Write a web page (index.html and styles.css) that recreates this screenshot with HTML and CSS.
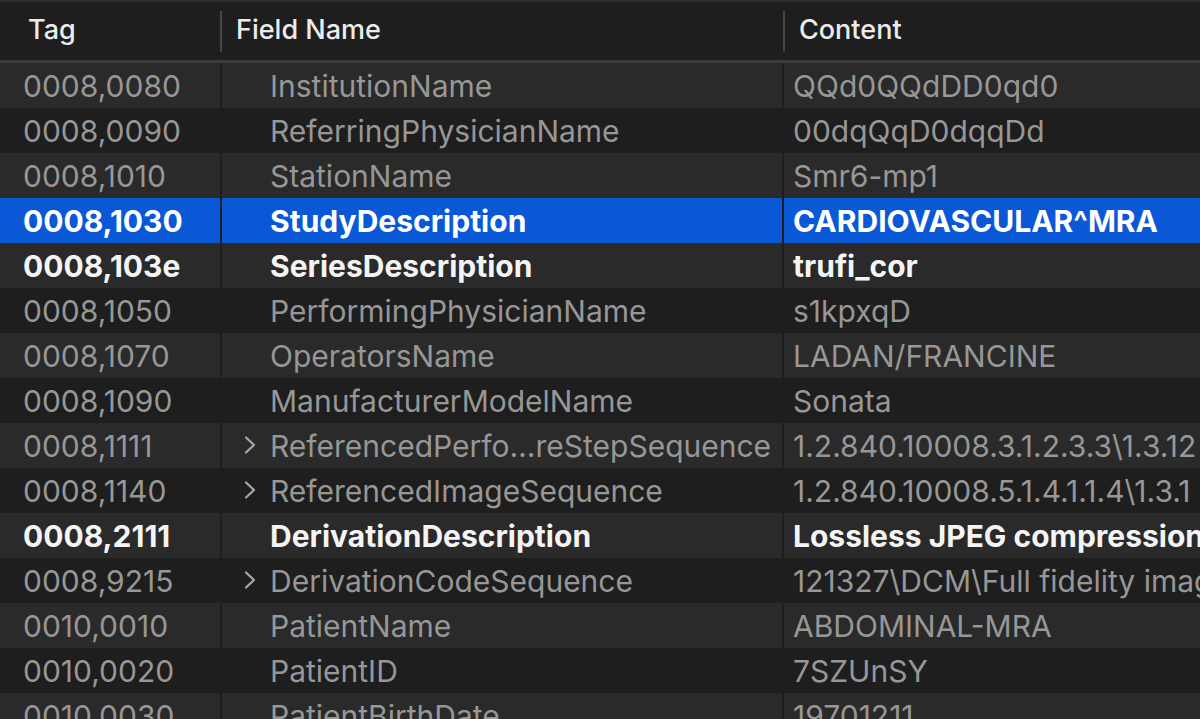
FILE: index.html
```html
<!DOCTYPE html>
<html lang="en">
<head>
    <meta charset="UTF-8">
    <title>DICOM Tags</title>
    <link rel="stylesheet" href="styles.css">
</head>
<body>
    <div class="table">
        <div class="head">
            <div class="th th-tag">Tag</div>
            <div class="th th-sep">Field Name</div>
            <div class="th th-sep">Content</div>
        </div>

        <div class="row">
            <div class="td tag">0008,0080</div>
            <div class="td name">InstitutionName</div>
            <div class="td value">QQd0QQdDD0qd0</div>
        </div>
        <div class="row">
            <div class="td tag">0008,0090</div>
            <div class="td name">ReferringPhysicianName</div>
            <div class="td value">00dqQqD0dqqDd</div>
        </div>
        <div class="row">
            <div class="td tag">0008,1010</div>
            <div class="td name">StationName</div>
            <div class="td value">Smr6-mp1</div>
        </div>
        <div class="row selected">
            <div class="td tag">0008,1030</div>
            <div class="td name">StudyDescription</div>
            <div class="td value">CARDIOVASCULAR^MRA</div>
        </div>
        <div class="row bold">
            <div class="td tag">0008,103e</div>
            <div class="td name">SeriesDescription</div>
            <div class="td value">trufi_cor</div>
        </div>
        <div class="row">
            <div class="td tag">0008,1050</div>
            <div class="td name">PerformingPhysicianName</div>
            <div class="td value">s1kpxqD</div>
        </div>
        <div class="row">
            <div class="td tag">0008,1070</div>
            <div class="td name">OperatorsName</div>
            <div class="td value">LADAN/FRANCINE</div>
        </div>
        <div class="row">
            <div class="td tag">0008,1090</div>
            <div class="td name">ManufacturerModelName</div>
            <div class="td value">Sonata</div>
        </div>
        <div class="row">
            <div class="td tag">0008,1111</div>
            <div class="td name"><svg class="chevron" viewBox="0 0 14 20"><path d="M3 2.5 L11 10 L3 17.5"/></svg>ReferencedPerfo…reStepSequence</div>
            <div class="td value">1.2.840.10008.3.1.2.3.3\1.3.12</div>
        </div>
        <div class="row">
            <div class="td tag">0008,1140</div>
            <div class="td name"><svg class="chevron" viewBox="0 0 14 20"><path d="M3 2.5 L11 10 L3 17.5"/></svg>ReferencedImageSequence</div>
            <div class="td value">1.2.840.10008.5.1.4.1.1.4\1.3.1</div>
        </div>
        <div class="row bold">
            <div class="td tag">0008,2111</div>
            <div class="td name">DerivationDescription</div>
            <div class="td value">Lossless JPEG compression</div>
        </div>
        <div class="row">
            <div class="td tag">0008,9215</div>
            <div class="td name"><svg class="chevron" viewBox="0 0 14 20"><path d="M3 2.5 L11 10 L3 17.5"/></svg>DerivationCodeSequence</div>
            <div class="td value">121327\DCM\Full fidelity image</div>
        </div>
        <div class="row">
            <div class="td tag">0010,0010</div>
            <div class="td name">PatientName</div>
            <div class="td value">ABDOMINAL-MRA</div>
        </div>
        <div class="row">
            <div class="td tag">0010,0020</div>
            <div class="td name">PatientID</div>
            <div class="td value">7SZUnSY</div>
        </div>
        <div class="row">
            <div class="td tag">0010,0030</div>
            <div class="td name">PatientBirthDate</div>
            <div class="td value">19701211</div>
        </div>
    </div>
</body>
</html>
```

FILE: styles.css
```css
body {
    margin: 0;
    background-color: #1e1e1e;
    font-family: Inter, "Noto Sans", sans-serif;
    overflow: hidden;
}
.table {
    width: 1200px;
}
.head {
    display: grid;
    grid-template-columns: 220px 561px 417px;
    column-gap: 2px;
    height: 58px;
    border-top: 2px solid #2c2c2c;
    border-bottom: 3px solid #3b3b3b;
    background-color: #1e1e1e;
}
.th {
    display: flex;
    align-items: center;
    padding-left: 14px;
    padding-bottom: 3px;
    font-size: 27px;
    font-weight: 500;
    color: #ececec;
}
.th-tag {
    padding-left: 28px;
}
.th-sep {
    border-left: 2px solid #464646;
    height: 38px;
    align-self: center;
    margin-left: -2px;
}
.row {
    display: grid;
    grid-template-columns: 220px 560px 416px;
    column-gap: 2px;
    height: 45px;
}
.td {
    display: flex;
    align-items: center;
    font-size: 30px;
    color: #979797;
    white-space: nowrap;
    overflow: hidden;
}
.row:nth-child(even) .td {
    background-color: #2a2a2a;
}
.tag {
    padding-left: 23px;
}
.name {
    padding-left: 48px;
    position: relative;
}
.value {
    padding-left: 9px;
}
.chevron {
    position: absolute;
    left: 21px;
    top: 12px;
    width: 14px;
    height: 20px;
    fill: none;
    stroke: #a8a8a8;
    stroke-width: 2.2;
    stroke-linecap: round;
    stroke-linejoin: round;
}
.bold .td {
    color: #f4f4f4;
    font-weight: 700;
}
.row.selected .td {
    background-color: #0a58d6;
    color: #ffffff;
    font-weight: 700;
}
```
